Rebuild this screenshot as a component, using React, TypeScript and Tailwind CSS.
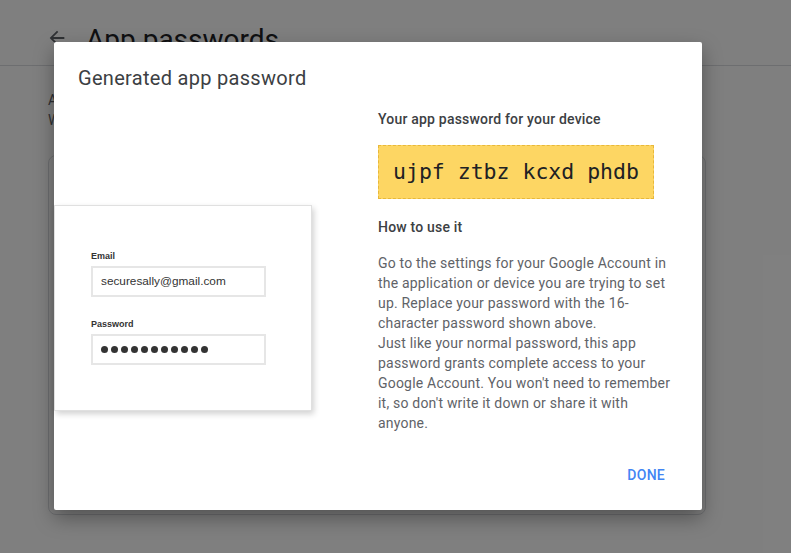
const bodyFont = { fontFamily: "Roboto, 'Liberation Sans', sans-serif" };

const FormPreview = () => (
  <div className="w-[258px] h-[206px] bg-white border border-[#e0e0e0] shadow-[2px_3px_6px_rgba(0,0,0,0.18)] pl-[36px] pt-[44px] font-['Liberation_Sans',Arial,sans-serif]">
    <p className="text-[9px] font-bold text-[#333] leading-[12px]">Email</p>
    <div className="mt-[4px] w-[175px] h-[31px] border-2 border-[#e6e6e6] flex items-center px-[8px] text-[11.8px] text-[#333]">
      securesally@gmail.com
    </div>
    <p className="mt-[21px] text-[9px] font-bold text-[#333] leading-[12px]">Password</p>
    <div className="mt-[4px] w-[175px] h-[31px] border-2 border-[#e6e6e6] flex items-center px-[8px] gap-[3px]">
      {Array.from({ length: 11 }).map((_, i) => (
        <span key={i} className="w-[7px] h-[7px] rounded-full bg-[#333]" />
      ))}
    </div>
  </div>
);

const App = () => (
  <div className="relative w-full h-[553px] bg-white overflow-hidden" style={bodyFont}>
    {/* Page behind the dialog */}
    <header className="h-[66px] border-b border-[#dadce0] flex items-center pl-[46px] gap-[18px]">
      <svg width="22" height="22" viewBox="0 0 24 24" className="mt-[10px]">
        <path d="M20 11H7.83l5.59-5.59L12 4l-8 8 8 8 1.41-1.41L7.83 13H20v-2z" fill="#5f6368" />
      </svg>
      <h1 className="text-[28px] leading-[36px] text-[#202124] mt-[14px]">App passwords</h1>
    </header>
    <div className="px-[48px] pt-[24px] text-[14px] leading-[20px] text-[#5f6368]">
      <p>App passwords let you sign in to your Google Account from apps on devices</p>
      <p>With 2-Step Verification turned on, learn more</p>
    </div>
    <div className="mx-[48px] mt-[25px] w-[658px] h-[360px] border border-[#dadce0] rounded-[8px]" />

    {/* Overlay */}
    <div className="absolute inset-0 bg-black/50" />

    {/* Dialog */}
    <div className="absolute left-[54px] top-[42px] w-[648px] h-[468px] bg-white rounded-[2px] shadow-[0_8px_20px_rgba(0,0,0,0.35)] flex flex-col">
      <h2 className="pl-[24px] pt-[24px] text-[20px] leading-[24px] tracking-[0.3px] text-[#3c4043]">Generated app password</h2>

      <div className="flex flex-1">
        <div className="w-[324px] pt-[115px]">
          <FormPreview />
        </div>
        <div className="w-[300px] pt-[19px] text-[#3c4043] tracking-[0.2px]">
          <p className="text-[14px] font-medium leading-[20px]">Your app password for your device</p>
          <div className="mt-[16px] w-[276px] h-[54px] bg-[#fdd663] border border-dashed border-[#e8b83a] flex items-center pl-[14px] font-['DejaVu_Sans_Mono',monospace] text-[21.5px] tracking-normal text-[#202124]">
            ujpf ztbz kcxd phdb
          </div>
          <p className="mt-[18px] text-[14px] font-medium leading-[20px]">How to use it</p>
          <p className="mt-[16px] text-[14px] leading-[20px] text-[#5f6368]">
            Go to the settings for your Google Account in the application or device you are trying to set up. Replace your password with the 16-character password shown above.
            <br />
            Just like your normal password, this app password grants complete access to your Google Account. You won't need to remember it, so don't write it down or share it with anyone.
          </p>
          <div className="flex justify-end pr-[13px] mt-[32px]">
            <button className="text-[14px] font-medium text-[#4285f4] tracking-[0.25px]">DONE</button>
          </div>
        </div>
      </div>
    </div>
  </div>
);

export default App;
